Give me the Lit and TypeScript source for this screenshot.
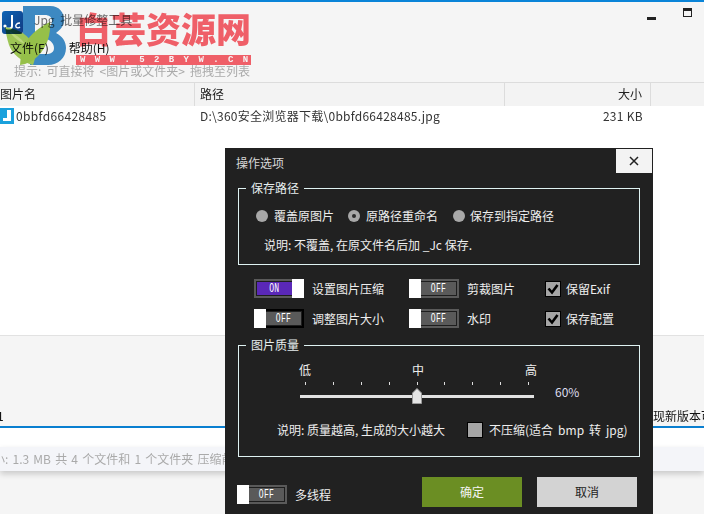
import { LitElement, html, css, svg } from "lit";
import { customElement } from "lit/decorators.js";

@customElement("switch-box")
class SwitchBox extends LitElement {
  static properties = {
    on: { type: Boolean },
    focused: { type: Boolean },
  };
  on = false;
  focused = false;

  static styles = css`
    :host {
      display: block;
      flex: none;
    }
    .box {
      box-sizing: border-box;
      width: 50px;
      height: 19px;
      display: flex;
      background: #5a5a5a;
    }
    .box.focused {
      background: #000;
    }
    .face {
      flex: 1;
      margin: 2px;
      border: 1px solid #1e1e1e;
      background: #5a5a5a;
      color: #fff;
      display: flex;
      align-items: center;
      justify-content: center;
      font: 13px/1 "Liberation Mono", monospace;
    }
    .box.on .face {
      background: #5a28b8;
      margin-right: 0;
      border-right: 0;
    }
    .box.off .face {
      margin-left: 0;
      border-left: 0;
    }
    .label {
      display: inline-block;
      transform: scaleX(0.62);
      letter-spacing: 0.5px;
    }
    .knob {
      width: 12px;
      background: #fff;
    }
  `;

  render() {
    const face = html`<div class="face"><span class="label">${this.on ? "ON" : "OFF"}</span></div>`;
    const knob = html`<div class="knob"></div>`;
    const cls = `box ${this.on ? "on" : "off"} ${this.focused ? "focused" : ""}`;
    return html`<div class=${cls}>${this.on ? html`${face}${knob}` : html`${knob}${face}`}</div>`;
  }
}

const logo = svg`
  <svg class="mark" width="70" height="70" viewBox="0 0 70 70">
    <path fill="#3f8fca" fill-rule="evenodd" d="M23 6H50C60 6 64 13 64 20C64 26 60 30 56 33C62 36 66 41 66 48C66 58 58 65 48 65H30V54H46C51 54 54 52 54 48C54 44 51 40 46 39L38 38V29H44C49 29 52 25 52 21C52 17 49 15 45 15H35V40H23Z"/>
    <path fill="#a4cd58" d="M5 27C18 29 30 35 34 47C36 54 35 60 33 65C22 62 12 54 9 45C7 39 6 33 5 27Z"/>
    <path fill="#9cc84c" d="M50 22C51 34 47 47 38 56C33 61 27 64 20 65C21 50 26 38 37 30C41 27 45 24 50 22Z"/>
    <path fill="#c3e080" d="M9 31C15 34 21 38 25 44C19 42 13 37 9 31Z"/>
  </svg>
`;

const fileIcon = svg`
  <svg class="ficon" width="14" height="16" viewBox="0 0 14 16">
    <rect width="14" height="16" fill="#1ba1dc"/>
    <path fill="#fff" d="M7 2H11V13H3V10H7Z"/>
  </svg>
`;

const appIcon = svg`
  <svg class="appicon" width="21" height="23" viewBox="0 0 21 23">
    <defs>
      <linearGradient id="ai" x1="0" y1="0" x2="1" y2="1">
        <stop offset="0" stop-color="#0d63b5"/>
        <stop offset="1" stop-color="#123a80"/>
      </linearGradient>
    </defs>
    <rect width="21" height="23" rx="3" fill="url(#ai)"/>
    <path d="M10 4V15C10 18 7 18 4 17" fill="none" stroke="#fff" stroke-width="2"/>
    <circle cx="3" cy="15" r="1.6" fill="#fff"/>
    <path d="M18 12C15 12 13 14 14 16C15 17 17 17 18 16" fill="none" stroke="#fff" stroke-width="1.4"/>
  </svg>
`;

const check = svg`
  <svg width="14" height="14" viewBox="0 0 14 14">
    <path d="M2.5 6.5L6 10.5L11.5 3" fill="none" stroke="#000" stroke-width="2.6"/>
  </svg>
`;

@customElement("app-root")
export class AppRoot extends LitElement {
  static styles = css`
    :host {
      display: block;
      position: relative;
      width: 704px;
      height: 514px;
      overflow: hidden;
      background: #f5f5f5;
      font: 12px/16px "Noto Sans CJK SC", "Noto Sans", sans-serif;
      color: #222;
    }

    /* main window */
    .top {
      height: 80px;
      border-top: 2px solid #0a84d8;
      display: flex;
      flex-direction: column;
    }
    .title {
      height: 33px;
      display: flex;
      align-items: center;
      padding-left: 2px;
      gap: 11px;
      color: #6b6b6b;
      word-spacing: 3px;
    }
    .title .appicon {
      margin-top: 7px;
      flex: none;
    }
    .title .name {
      flex: 1;
      padding-top: 2px;
    }
    .win {
      display: flex;
      align-items: center;
      margin-top: -6px;
    }
    .min {
      width: 9px;
      height: 3px;
      background: #222;
      margin-top: 6px;
    }
    .max {
      box-sizing: border-box;
      width: 9px;
      height: 9px;
      border: 1px solid #222;
      border-top-width: 3px;
      margin: 0 12px 0 27px;
      position: relative;
      top: -3px;
    }
    .menu {
      display: flex;
      gap: 20px;
      padding: 5px 0 0 10px;
      height: 22px;
      box-sizing: border-box;
      color: #111;
    }
    .hint {
      padding: 6px 0 0 14px;
      color: #aaa;
      height: 20px;
      box-sizing: border-box;
      line-height: 16px;
      word-spacing: 2.4px;
    }

    .thead,
    .trow {
      display: grid;
      grid-template-columns: 195px 310px 146px 1fr;
    }
    .thead {
      height: 24px;
      line-height: 22px;
      box-sizing: border-box;
      border-top: 1px solid #dcdcdc;
      background: #f3f3f3;
      color: #222;
    }
    .thead > div {
      border-right: 1px solid #dcdcdc;
      box-sizing: border-box;
    }
    .thead > div:nth-child(2) {
      padding-left: 5px;
    }
    .thead > div:nth-child(3) {
      text-align: right;
      padding-right: 8px;
    }
    .thead > div:nth-child(4) {
      border: 0;
    }
    .list {
      height: 230px;
      background: #fff;
      border-bottom: 1px solid #e2e2e2;
      box-sizing: border-box;
    }
    .trow {
      height: 24px;
      line-height: 20px;
      color: #333;
    }
    .trow .cname {
      display: flex;
      align-items: flex-start;
      gap: 2px;
    }
    .trow .cname span {
      letter-spacing: 0.35px;
    }
    .trow .ficon {
      flex: none;
      margin-top: 2px;
    }
    .trow .cpath {
      padding-left: 5px;
      white-space: nowrap;
      letter-spacing: 0.25px;
    }
    .trow .csize {
      text-align: right;
      padding-right: 8px;
      letter-spacing: 0.3px;
    }
    .log {
      height: 92px;
      box-sizing: border-box;
      padding-top: 71px;
      display: flex;
      justify-content: space-between;
      border-bottom: 2px solid #0a7fd0;
      color: #111;
      line-height: 17px;
      white-space: nowrap;
    }
    .log .one {
      margin-left: -3px;
    }
    .log .news {
      width: 51px;
      overflow: hidden;
    }
    .blank {
      height: 19px;
      background: #fff;
    }
    .status {
      height: 24px;
      background: #f4f5f9;
      color: #aaa;
      line-height: 23px;
      white-space: nowrap;
      overflow: hidden;
      box-shadow: 0 3px 6px rgba(0, 0, 0, 0.18);
      word-spacing: 1.5px;
    }
    .status span {
      margin-left: -19px;
      display: inline-block;
    }

    /* watermark */
    .wm {
      position: absolute;
      left: 0;
      top: 0;
      width: 260px;
      height: 70px;
      mix-blend-mode: multiply;
    }
    .wm .mark {
      position: absolute;
      left: 0;
      top: 0;
    }
    .wm .cn {
      position: absolute;
      left: 76px;
      top: 6px;
      font-size: 35px;
      line-height: 44px;
      font-weight: 900;
      color: #f9636c;
      white-space: nowrap;
    }
    .wm .url {
      position: absolute;
      left: 76px;
      top: 55px;
      width: 175px;
      height: 10px;
      background: #f9636c;
      color: #fff;
      font: bold 9px/10px "Liberation Mono", monospace;
      letter-spacing: 9.4px;
      text-indent: 4px;
      white-space: nowrap;
      overflow: hidden;
    }

    /* dialog */
    .dlg {
      position: absolute;
      left: 225px;
      top: 148px;
      width: 428px;
      height: 366px;
      box-sizing: border-box;
      background: #212121;
      color: #eee;
      padding: 1px 13px 0;
      display: flex;
      flex-direction: column;
    }
    .dlg-head {
      height: 31px;
      display: flex;
      justify-content: space-between;
      margin-right: -12px;
      margin-left: -2px;
      color: #d8d8d8;
      line-height: 28px;
    }
    .close {
      width: 36px;
      height: 24px;
      background: #f3f3f3;
      display: flex;
      align-items: center;
      justify-content: center;
    }
    fieldset {
      margin: 0;
      padding: 0;
      box-sizing: border-box;
      border: 1px solid #dff2f2;
      width: 402px;
      min-width: 0;
    }
    legend {
      margin-left: 7px;
      padding: 0 5px;
      line-height: 16px;
      font-size: 12px;
      color: #e6eeee;
    }
    .path {
      height: 85px;
    }
    .radios {
      display: flex;
      align-items: center;
      padding: 12px 0 0 17px;
      height: 16px;
    }
    .radio {
      width: 12px;
      height: 12px;
      border-radius: 50%;
      background: #a8a8a8;
      flex: none;
      margin-right: 6px;
      box-sizing: border-box;
      display: flex;
      align-items: center;
      justify-content: center;
    }
    .radio.sel::after {
      content: "";
      width: 4px;
      height: 4px;
      border-radius: 50%;
      background: #2a2a2a;
    }
    .radio.last {
      margin: 0 5px 0 1px;
    }
    .radios .lab {
      margin-right: 14px;
    }
    .note {
      padding: 13px 0 0 25px;
      white-space: nowrap;
    }
    .opts {
      display: grid;
      grid-template-columns: 155px 136px 1fr;
      grid-auto-rows: 19px;
      row-gap: 11px;
      padding: 14px 0 0 16px;
      height: 72px;
      box-sizing: border-box;
    }
    .opt {
      display: flex;
      align-items: center;
      gap: 8px;
    }
    .chk {
      width: 16px;
      height: 16px;
      box-sizing: border-box;
      border: 1px solid #000;
      background: #a5a5a5;
      flex: none;
      display: flex;
      align-items: center;
      justify-content: center;
    }
    .opt.c {
      gap: 5px;
    }
    .quality {
      height: 120px;
    }
    .scale {
      width: 238px;
      margin-left: 60px;
      padding-top: 9px;
      display: flex;
      justify-content: space-between;
      line-height: 16px;
    }
    .slide-row {
      display: flex;
      align-items: flex-start;
    }
    .slider {
      position: relative;
      width: 234px;
      height: 24px;
      margin: 4px 0 0 61px;
    }
    .ticks {
      display: flex;
      justify-content: space-between;
      padding: 0 5px;
    }
    .tick {
      width: 1px;
      height: 3px;
      background: #ddd;
    }
    .track {
      height: 3px;
      margin-top: 10px;
      background: #e2e2e2;
    }
    .thumb {
      position: absolute;
      left: 112px;
      top: 6px;
      display: block;
    }
    .pct {
      margin: 6px 0 0 21px;
      color: #dde;
    }
    .q-note {
      display: flex;
      align-items: center;
      padding: 16px 0 0 38px;
      white-space: nowrap;
    }
    .q-note .chk {
      margin: 0 6px 0 22px;
    }
    .q-note .wide {
      word-spacing: 2.3px;
    }
    .foot {
      display: flex;
      align-items: center;
      margin-top: 20px;
      margin-left: -1px;
    }
    .foot .lab {
      margin-left: 8px;
      flex: 1;
      padding-top: 6px;
    }
    .foot switch-box {
      margin-top: 5px;
    }
    .btn {
      width: 100px;
      height: 30px;
      line-height: 29px;
      text-align: center;
    }
    .ok {
      background: #6b8e23;
      color: #f4f4f4;
      margin-right: 15px;
    }
    .no {
      background: #d3d3d3;
      color: #222;
      margin-right: 3px;
    }
  `;

  render() {
    return html`
      <div class="top">
        <div class="title">
          ${appIcon}
          <div class="name">Jpg 批量修整工具</div>
          <div class="win"><div class="min"></div><div class="max"></div></div>
        </div>
        <div class="menu"><span>文件(F)</span><span>帮助(H)</span></div>
        <div class="hint">提示: 可直接将 &lt;图片或文件夹&gt; 拖拽至列表</div>
      </div>
      <div class="thead">
        <div>图片名</div>
        <div>路径</div>
        <div>大小</div>
        <div></div>
      </div>
      <div class="list">
        <div class="trow">
          <div class="cname">${fileIcon}<span>0bbfd66428485</span></div>
          <div class="cpath">D:\\360安全浏览器下载\\0bbfd66428485.jpg</div>
          <div class="csize">231 KB</div>
        </div>
      </div>
      <div class="log"><span class="one">1</span><span class="news">现新版本可用</span></div>
      <div class="blank"></div>
      <div class="status"><span>大小: 1.3 MB 共 4 个文件和 1 个文件夹 压缩前</span></div>

      <div class="wm">
        ${logo}
        <div class="cn">白芸资源网</div>
        <div class="url">WWW.52BYW.CN</div>
      </div>

      <div class="dlg">
        <div class="dlg-head">
          <span>操作选项</span>
          <div class="close">
            <svg width="10" height="10" viewBox="0 0 10 10">
              <path d="M1 1L9 9M9 1L1 9" stroke="#222" stroke-width="1.5"/>
            </svg>
          </div>
        </div>

        <fieldset class="path">
          <legend>保存路径</legend>
          <div class="radios">
            <span class="radio"></span><span class="lab">覆盖原图片</span>
            <span class="radio sel"></span><span class="lab">原路径重命名</span>
            <span class="radio last"></span><span>保存到指定路径</span>
          </div>
          <div class="note">说明: 不覆盖, 在原文件名后加 _Jc 保存.</div>
        </fieldset>

        <div class="opts">
          <div class="opt"><switch-box on></switch-box><span>设置图片压缩</span></div>
          <div class="opt"><switch-box></switch-box><span>剪裁图片</span></div>
          <div class="opt c"><span class="chk">${check}</span><span>保留Exif</span></div>
          <div class="opt"><switch-box focused></switch-box><span>调整图片大小</span></div>
          <div class="opt"><switch-box></switch-box><span>水印</span></div>
          <div class="opt c"><span class="chk">${check}</span><span>保存配置</span></div>
        </div>

        <fieldset class="quality">
          <legend>图片质量</legend>
          <div class="scale"><span>低</span><span>中</span><span>高</span></div>
          <div class="slide-row">
            <div class="slider">
              <div class="ticks">
                ${Array.from({ length: 9 }, () => html`<span class="tick"></span>`)}
              </div>
              <div class="track"></div>
              <svg class="thumb" width="10" height="16" viewBox="0 0 10 16">
                <path d="M0.5 5L5 0.5L9.5 5V15.5H0.5Z" fill="#e4e4e4" stroke="#9a9a9a"/>
              </svg>
            </div>
            <div class="pct">60%</div>
          </div>
          <div class="q-note">
            <span>说明: 质量越高, 生成的大小越大</span>
            <span class="chk"></span>
            <span class="wide">不压缩(适合 bmp 转 jpg)</span>
          </div>
        </fieldset>

        <div class="foot">
          <switch-box></switch-box>
          <span class="lab">多线程</span>
          <div class="btn ok">确定</div>
          <div class="btn no">取消</div>
        </div>
      </div>
    `;
  }
}
